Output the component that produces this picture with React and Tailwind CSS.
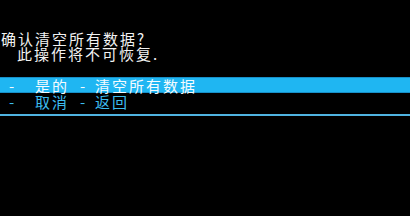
export default function App() {
  return (
    <div className="w-[410px] h-[216px] bg-black overflow-hidden pt-[31px] text-[15px] leading-[15px] tracking-[2px]" style={{ fontFamily: '"Noto Sans CJK SC", "Noto Sans", sans-serif' }}>

      {/* Prompt */}
      <div className="h-[15px] pl-[1px] text-[#f2f2f2] whitespace-nowrap">确认清空所有数据?</div>
      <div className="h-[15px] pl-[17px] text-[#f2f2f2] whitespace-nowrap">此操作将不可恢复.</div>

      {/* Menu */}
      <div className="mt-[16px] h-[16px] bg-[#1fb6f2] border-y border-[#1890c8] flex items-center text-[#f4fbff] whitespace-nowrap">
        <span className="w-[35px] pl-[9px]">-</span>
        <span className="w-[45px]">是的</span>
        <span className="w-[15px]">-</span>
        <span>清空所有数据</span>
      </div>
      <div className="h-[16px] flex items-center text-[#3dbdf0] whitespace-nowrap">
        <span className="w-[35px] pl-[9px]">-</span>
        <span className="w-[45px]">取消</span>
        <span className="w-[15px]">-</span>
        <span>返回</span>
      </div>

      <div className="mt-[5px] h-[2px] bg-[#4fb3e0]"></div>
    </div>
  )
}
